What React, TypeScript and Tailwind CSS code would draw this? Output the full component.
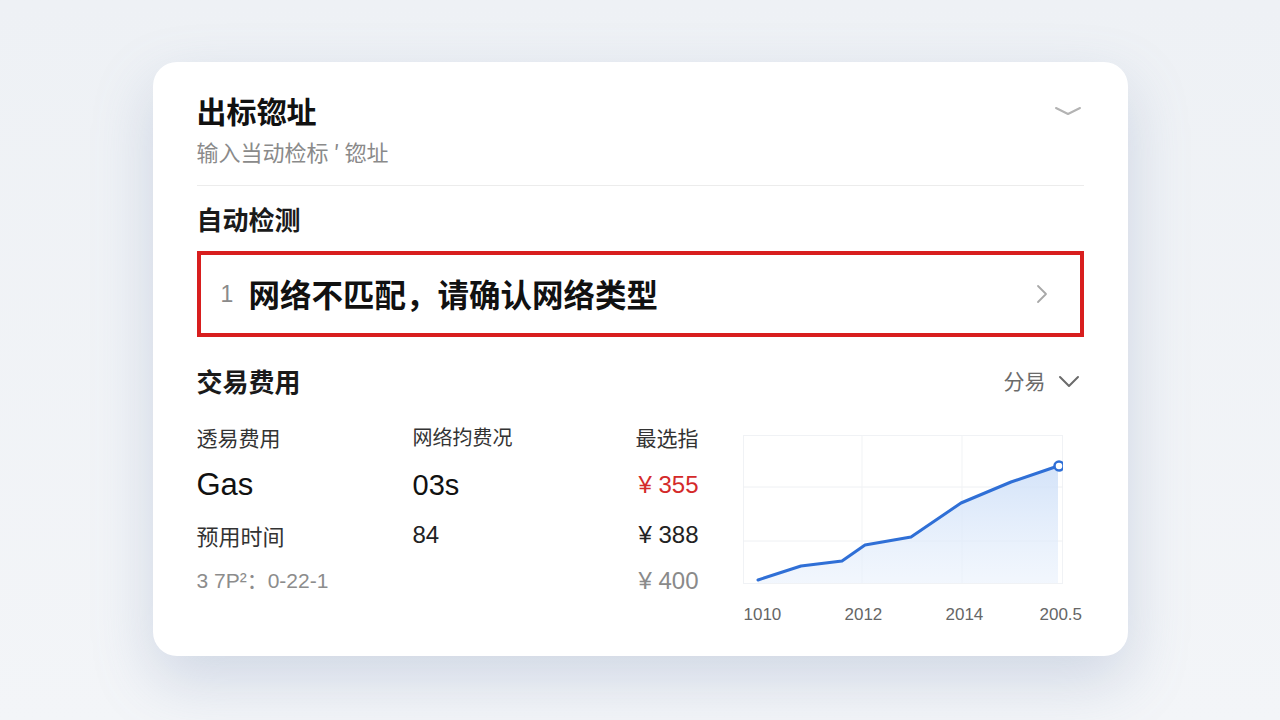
import React from 'react';

const font = { fontFamily: '"Noto Sans CJK SC", "Noto Sans", sans-serif' };
const latin = { fontFamily: '"Liberation Sans", "Noto Sans CJK SC", sans-serif' };

// Chart points, relative to the plot box (320 x 148)
const points: [number, number][] = [
  [15, 145], [58, 131], [99, 126], [122, 110], [168, 102], [218, 68], [268, 47], [315, 31],
];

function FeeChart() {
  const line = points.map(([x, y], i) => `${i === 0 ? 'M' : 'L'}${x} ${y}`).join(' ');
  const area = `${line} L315 148 L15 148 Z`;
  return (
    <div className="flex flex-col">
      <svg width="320" height="150" viewBox="0 0 320 150">
        <defs>
          <linearGradient id="fill" x1="0" y1="0" x2="0" y2="1">
            <stop offset="0%" stopColor="#cfe0f8" stopOpacity="0.9" />
            <stop offset="100%" stopColor="#e9f1fc" stopOpacity="0.6" />
          </linearGradient>
        </defs>
        <rect x="0.5" y="0.5" width="319" height="148" fill="none" stroke="#f0f2f5" />
        <line x1="0" y1="52" x2="320" y2="52" stroke="#eef0f3" />
        <line x1="0" y1="106" x2="320" y2="106" stroke="#eef0f3" />
        <line x1="119" y1="0" x2="119" y2="148" stroke="#f1f3f5" />
        <line x1="219" y1="0" x2="219" y2="148" stroke="#f1f3f5" />
        <path d={area} fill="url(#fill)" />
        <path d={line} fill="none" stroke="#2f6fd6" strokeWidth="3" strokeLinejoin="round" strokeLinecap="round" />
        <circle cx="316" cy="31" r="4.5" fill="#fff" stroke="#2f6fd6" strokeWidth="2.5" />
      </svg>
      <div className="relative h-[30px] mt-[17px] text-[17px] text-[#666]" style={latin}>
        <span className="absolute left-[1px] top-0">1010</span>
        <span className="absolute left-[102px] top-0">2012</span>
        <span className="absolute left-[203px] top-0">2014</span>
        <span className="absolute left-[297px] top-0">200.5</span>
      </div>
    </div>
  );
}

function App() {
  return (
    <div className="min-h-screen w-full bg-gradient-to-b from-[#eef1f5] to-[#f3f5f8] pt-[62px]" style={font}>
      {/* Card */}
      <div className="mx-auto w-[975px] h-[594px] bg-white rounded-[24px] shadow-[0_24px_60px_rgba(120,140,180,0.28)] px-[44px] pt-[28px]">
        {/* Header */}
        <div className="flex justify-between">
          <div>
            <h1 className="text-[30px] leading-[40px] font-bold text-[#111]">出标锪址</h1>
            <p className="mt-[7px] text-[22px] leading-[28px] text-[#8a8a8a]">输入当动检标 ′ 锪址</p>
          </div>
          <svg width="28" height="12" viewBox="0 0 28 12" className="mt-[15px] mr-[2px]">
            <path d="M2 3 L14 9 L26 3" fill="none" stroke="#b3b3b3" strokeWidth="2" strokeLinecap="round" strokeLinejoin="round" />
          </svg>
        </div>
        <div className="mt-[20px] h-px bg-[#ececec]" />

        {/* Auto detect */}
        <h2 className="mt-[16px] text-[26px] leading-[34px] font-semibold text-[#1a1a1a]">自动检测</h2>
        <div className="mt-[15px] h-[86px] border-[4px] border-[#d81e1e] flex items-center pl-[20px] pr-[32px]">
          <span className="text-[23px] text-[#8a8a8a] w-[28px]" style={latin}>1</span>
          <span className="text-[31.5px] font-bold text-[#111]">网络不匹配，请确认网络类型</span>
          <svg width="12" height="20" viewBox="0 0 12 20" className="ml-auto">
            <path d="M2 2 L10 10 L2 18" fill="none" stroke="#a8a8a8" strokeWidth="1.8" strokeLinecap="round" strokeLinejoin="round" />
          </svg>
        </div>

        {/* Fees */}
        <div className="mt-[27px] flex items-center justify-between">
          <h2 className="text-[26px] leading-[34px] font-semibold text-[#1a1a1a]">交易费用</h2>
          <div className="flex items-center gap-[12px] text-[21px] text-[#6b6b6b] mr-[4px]">
            <span>分易</span>
            <svg width="22" height="14" viewBox="0 0 22 14">
              <path d="M2 3 L11 12 L20 3" fill="none" stroke="#6b6b6b" strokeWidth="2" strokeLinecap="round" strokeLinejoin="round" />
            </svg>
          </div>
        </div>

        <div className="flex items-start mt-[24px]">
          <div className="w-[502px] grid grid-cols-[216px_1fr_auto] items-center text-[#222]">
            <span className="h-[30px] text-[21px] leading-[30px] text-[#333]">透易费用</span>
            <span className="h-[30px] text-[20px] leading-[30px] text-[#333]">网络抣费况</span>
            <span className="h-[30px] text-[21px] leading-[30px] text-[#333] text-right">最选指</span>

            <span className="mt-[13px] h-[40px] text-[31px] leading-[40px] font-medium text-[#111]" style={latin}>Gas</span>
            <span className="mt-[13px] h-[40px] text-[29px] leading-[40px] font-medium text-[#111]" style={latin}>03s</span>
            <span className="mt-[13px] h-[40px] text-[24px] leading-[40px] text-right text-[#d42a2a]" style={latin}>¥ 355</span>

            <span className="mt-[15px] h-[30px] text-[22px] leading-[30px] text-[#333]">预用时间</span>
            <span className="mt-[15px] h-[30px] text-[24px] leading-[30px] text-[#222]" style={latin}>84</span>
            <span className="mt-[15px] h-[30px] text-[24px] leading-[30px] text-right text-[#222]" style={latin}>¥ 388</span>

            <span className="mt-[16px] h-[30px] text-[21px] leading-[30px] text-[#8c8c8c]" style={latin}>3 7P²：0-22-1</span>
            <span className="mt-[16px] h-[30px]" />
            <span className="mt-[16px] h-[30px] text-[24px] leading-[30px] text-right text-[#8a8a8a]" style={latin}>¥ 400</span>
          </div>
          <div className="ml-[44px] pt-[13px]">
            <FeeChart />
          </div>
        </div>
      </div>
    </div>
  );
}

export default App;
